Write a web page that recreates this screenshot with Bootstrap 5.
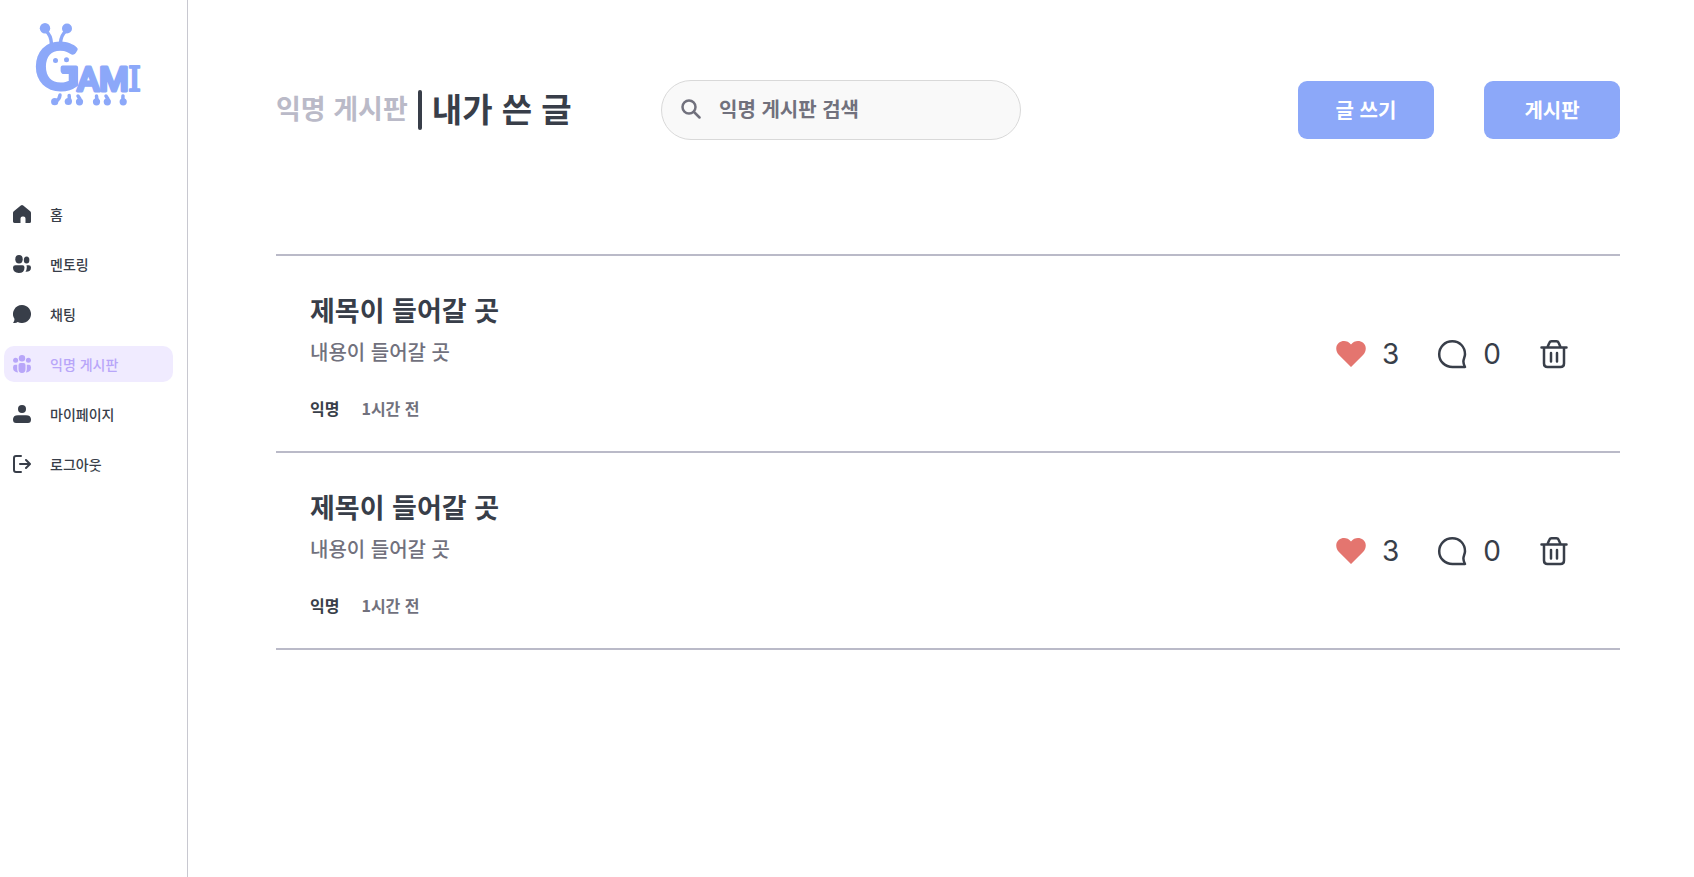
<!DOCTYPE html>
<html lang="ko">
<head>
<meta charset="utf-8">
<meta name="viewport" content="width=device-width, initial-scale=1">
<title>GAMI - 내가 쓴 글</title>
<link href="https://cdn.jsdelivr.net/npm/bootstrap@5.3.0/dist/css/bootstrap.min.css" rel="stylesheet">
<style>
  :root { --ink: #383e49; --muted-ink: #71717d; --pale: #babac8; --brand: #8ca8f9; }
  body { font-family: Inter, "Noto Sans CJK KR", sans-serif; color: var(--ink); background: #fff; }
  .hangul { font-family: "Noto Sans CJK KR", sans-serif; font-weight: 500; }
  .sidebar { width: 188px; border-right: 1px solid #c8c8d0; }
  .logo-link { margin: 20px 32px 88px; }
  .side-nav { gap: 14px; padding: 0 14px 0 4px; }
  .side-nav .nav-link { height: 36px; padding: 0 0 0 9px; gap: 19px; border-radius: 10px; color: var(--ink); font-size: 14px; line-height: 20px; }
  .side-nav .nav-link.active { background: #f0ebff; color: #b8a6f9; }
  .content { padding: 80px 74px 40px 88px; }
  .page-title { width: 385px; gap: 10px; }
  .crumb { font-size: 27px; line-height: 36px; padding-bottom: 4px; color: var(--pale); text-decoration: none; font-weight: 700; }
  .split { width: 4px; height: 40px; border-radius: 2px; background: var(--ink); }
  .page-title h1 { font-size: 33px; line-height: 36px; padding-bottom: 4px; font-weight: 700; }
  .search { width: 360px; height: 60px; padding: 0 20px 2px 19px; gap: 18px; border: 1px solid #d9d9d9; border-radius: 30px; background: #f9f9f9; color: var(--muted-ink); }
  .search input { font-size: 20px; line-height: 28px; color: var(--muted-ink); font-weight: 700; }
  .search input::placeholder { color: var(--muted-ink); opacity: 1; }
  .actions { gap: 50px; }
  .btn-brand { --bs-btn-bg: var(--brand); --bs-btn-color: #fff; --bs-btn-hover-bg: #7896f0; --bs-btn-hover-color: #fff; --bs-btn-border-radius: 9px; --bs-btn-font-size: 20px; width: 136px; height: 58px; border: 0; font-weight: 700; }
  .posts { margin-top: 114px; border-top: 2px solid var(--pale); }
  .post { padding: 31px 51px 31px 34px; border-bottom: 2px solid var(--pale); }
  .post-body { padding-top: 7px; }
  .post h2 { font-size: 27px; line-height: 32px; margin-bottom: 12px; font-weight: 700; }
  .post-text { font-size: 20px; line-height: 28px; margin-bottom: 30px; color: var(--muted-ink); }
  .post-meta { font-size: 16px; line-height: 24px; gap: 22px; font-weight: 700; }
  .post-meta time { color: var(--muted-ink); }
  .stats { gap: 38px; }
  .stat { gap: 16px; font-size: 28px; line-height: 32px; }
  .stat, .icon-btn { background: none; border: 0; padding: 0; color: var(--ink); }
</style>
</head>
<body>
<svg class="d-none" aria-hidden="true">
  <symbol id="heart" viewBox="0 0 30 30"><path fill="#e4756f" d="M15 28 3.200 16.200C-.8 12-.6 6.600 2.900 3.800c3.600-2.900 9-2.200 12.100 1.600 3.100-3.800 8.500-4.500 12.100-1.600 3.500 2.800 3.700 8.200-.3 12.400z"/></symbol>
  <symbol id="bubble" viewBox="0 0 30 30"><path fill="none" stroke="currentColor" stroke-width="2.500" stroke-linejoin="round" d="M15.500 28C8 28 2.200 22.300 2.200 15.200S7.800 2.200 15.300 2.200 28 8 28 15.200c0 2.200-1.600 5-1.600 7.200 0 2 .6 3.700 1.600 5.600z"/></symbol>
  <symbol id="trash" viewBox="0 0 30 30"><g fill="none" stroke="currentColor" stroke-width="2.500" stroke-linecap="round" stroke-linejoin="round"><path d="M2.500 8.500h25M5 8.500v16q0 3.500 3.500 3.500h13q3.500 0 3.500-3.500v-16M8.500 8l2-4.500q.5-1.300 2-1.300h5q1.500 0 2 1.300l2 4.500M12 14v8.500M18 14v8.500"/></g></symbol>
</svg>
<div class="d-flex min-vh-100">
  <aside class="sidebar flex-shrink-0">
    <a class="logo-link d-block" href="#" aria-label="GAMI">
      <svg class="d-block overflow-visible" width="112" height="88" viewBox="32 20 112 88" fill="#8ca8f9" stroke="#8ca8f9" stroke-linejoin="round" stroke-linecap="round">
        <g stroke="none">
          <circle cx="45" cy="28.300" r="5.200"/><circle cx="67" cy="28.500" r="5"/>
          <circle cx="55.500" cy="60.500" r="2.500"/><circle cx="66.500" cy="59.800" r="2.500"/>
          <circle cx="54.700" cy="101.700" r="3.600"/><circle cx="68.300" cy="101.500" r="3.600"/>
          <circle cx="79.500" cy="101.800" r="3.600"/><circle cx="96.500" cy="101.800" r="3.600"/>
          <circle cx="107.300" cy="101.800" r="3.600"/><circle cx="123.200" cy="101.800" r="3.600"/>
        </g>
        <path fill="none" stroke-width="3.500" d="M46 31q5 4 5.500 13M66 31q-5 4-5.500 12M56.500 101q3-2 3.500-6M70 101q-1-3-.8-5.500M80 101q0-3-2-5M97.500 101q-1-3-1-5M108 101q0-3-2-5M123.500 101q-1-3-.5-5"/>
        <g font-family="Roboto, sans-serif" font-weight="500">
          <text x="35" y="89" font-size="61" font-weight="400" font-family="Lato, sans-serif" stroke-width="4">G</text>
          <text x="77" y="91" font-size="34" stroke-width="3">A</text>
          <text x="99" y="91" font-size="34" stroke-width="3">M</text>
          <text x="128" y="91" font-size="33" font-weight="400" font-family="DejaVu Serif, serif" stroke-width="2">I</text>
        </g>
      </svg>
    </a>
    <nav class="side-nav nav flex-column hangul">
      <a class="nav-link d-flex align-items-center" href="#"><svg width="18" height="18" viewBox="0 0 18 18" fill="currentColor"><path d="M7.800.5q1.200-.9 2.400 0l7 5.800q.8.700.8 1.700v8.500q0 1.500-1.500 1.500h-4v-4.500q0-2-2-2h-1q-2 0-2 2V18h-4.500Q0 18 0 16.500V8q0-1 .8-1.700z"/></svg>홈</a>
      <a class="nav-link d-flex align-items-center" href="#"><svg width="18" height="18" viewBox="0 0 18 18" fill="currentColor"><ellipse cx="6" cy="4.200" rx="3.700" ry="4.200"/><ellipse cx="13.600" cy="5" rx="2.800" ry="3.500"/><path d="M2.500 10.200h7q2 0 2 2.300 0 5.500-5.800 5.500T0 12.500q0-2.300 2.500-2.300zM13.500 10.200h2.200q2.300 0 2.300 2.300 0 4.500-5.500 4.300 1.300-2 1.300-4.200 0-1.400-.3-2.400z"/></svg>멘토링</a>
      <a class="nav-link d-flex align-items-center" href="#"><svg width="18" height="18" viewBox="0 0 18 18" fill="currentColor"><path d="M9 0a9 9 0 1 1-4.300 16.900Q3 18.200.5 18q-.6-.1-.2-.6Q1.700 15.500 1.400 13.800A9 9 0 0 1 9 0z"/></svg>채팅</a>
      <a class="nav-link active d-flex align-items-center" href="#" aria-current="page"><svg width="18" height="18" viewBox="0 0 18 18" fill="currentColor"><circle cx="9" cy="3.200" r="3.200"/><circle cx="2.600" cy="5.200" r="2.500"/><circle cx="15.400" cy="5.200" r="2.500"/><path d="M7.500 8h3q2 0 2 2v4q0 4-3.500 4t-3.500-4v-4q0-2 2-2zM1.800 9.800h2.400v4.500q0 1.500.9 3.200Q0 17.200 0 12.500 0 9.800 1.800 9.800zM16.200 9.800h-2.400v4.500q0 1.500-.9 3.200 5.100-.3 5.100-5 0-2.700-1.800-2.700z"/></svg>익명 게시판</a>
      <a class="nav-link d-flex align-items-center" href="#"><svg width="18" height="18" viewBox="0 0 18 18" fill="currentColor"><circle cx="9" cy="4" r="4"/><path d="M5 10.200h8q5 0 5 4.300 0 3.500-3 3.500H3q-3 0-3-3.500 0-4.300 5-4.300z"/></svg>마이페이지</a>
      <a class="nav-link d-flex align-items-center" href="#"><svg width="18" height="18" viewBox="0 0 18 18" fill="none" stroke="currentColor" stroke-width="2" stroke-linecap="round" stroke-linejoin="round"><path d="M8 1H3Q1 1 1 3v12q0 2 2 2h5M7 9h9.500M13 5l4 4-4 4"/></svg>로그아웃</a>
    </nav>
  </aside>
  <main class="content flex-grow-1">
    <header class="d-flex flex-wrap align-items-center">
      <div class="page-title d-flex align-items-center hangul">
        <a class="crumb" href="#">익명 게시판</a>
        <span class="split"></span>
        <h1 class="mb-0">내가 쓴 글</h1>
      </div>
      <form class="search d-flex align-items-center" role="search">
        <svg class="flex-shrink-0" width="20" height="20" viewBox="0 0 20 20" fill="none" stroke="currentColor" stroke-width="2.500" stroke-linecap="round"><circle cx="8" cy="8" r="6.500"/><path d="m13 13 5.500 5.500"/></svg>
        <input class="form-control-plaintext p-0 hangul" type="search" placeholder="익명 게시판 검색" aria-label="익명 게시판 검색">
      </form>
      <div class="actions d-flex ms-auto">
        <button type="button" class="btn btn-brand hangul">글 쓰기</button>
        <button type="button" class="btn btn-brand hangul">게시판</button>
      </div>
    </header>
    <section class="posts">
      <article class="post d-flex align-items-center justify-content-between">
        <div class="post-body hangul">
          <h2>제목이 들어갈 곳</h2>
          <p class="post-text">내용이 들어갈 곳</p>
          <div class="post-meta d-flex"><span>익명</span><time>1시간 전</time></div>
        </div>
        <div class="stats d-flex align-items-center">
          <button type="button" class="stat d-flex align-items-center" aria-label="좋아요"><svg width="30" height="30"><use href="#heart"/></svg><span>3</span></button>
          <button type="button" class="stat d-flex align-items-center" aria-label="댓글"><svg width="30" height="30"><use href="#bubble"/></svg><span>0</span></button>
          <button type="button" class="icon-btn d-flex" aria-label="삭제"><svg width="30" height="30"><use href="#trash"/></svg></button>
        </div>
      </article>
      <article class="post d-flex align-items-center justify-content-between">
        <div class="post-body hangul">
          <h2>제목이 들어갈 곳</h2>
          <p class="post-text">내용이 들어갈 곳</p>
          <div class="post-meta d-flex"><span>익명</span><time>1시간 전</time></div>
        </div>
        <div class="stats d-flex align-items-center">
          <button type="button" class="stat d-flex align-items-center" aria-label="좋아요"><svg width="30" height="30"><use href="#heart"/></svg><span>3</span></button>
          <button type="button" class="stat d-flex align-items-center" aria-label="댓글"><svg width="30" height="30"><use href="#bubble"/></svg><span>0</span></button>
          <button type="button" class="icon-btn d-flex" aria-label="삭제"><svg width="30" height="30"><use href="#trash"/></svg></button>
        </div>
      </article>
    </section>
  </main>
</div>
<script src="https://cdn.jsdelivr.net/npm/bootstrap@5.3.0/dist/js/bootstrap.bundle.min.js"></script>
</body>
</html>
